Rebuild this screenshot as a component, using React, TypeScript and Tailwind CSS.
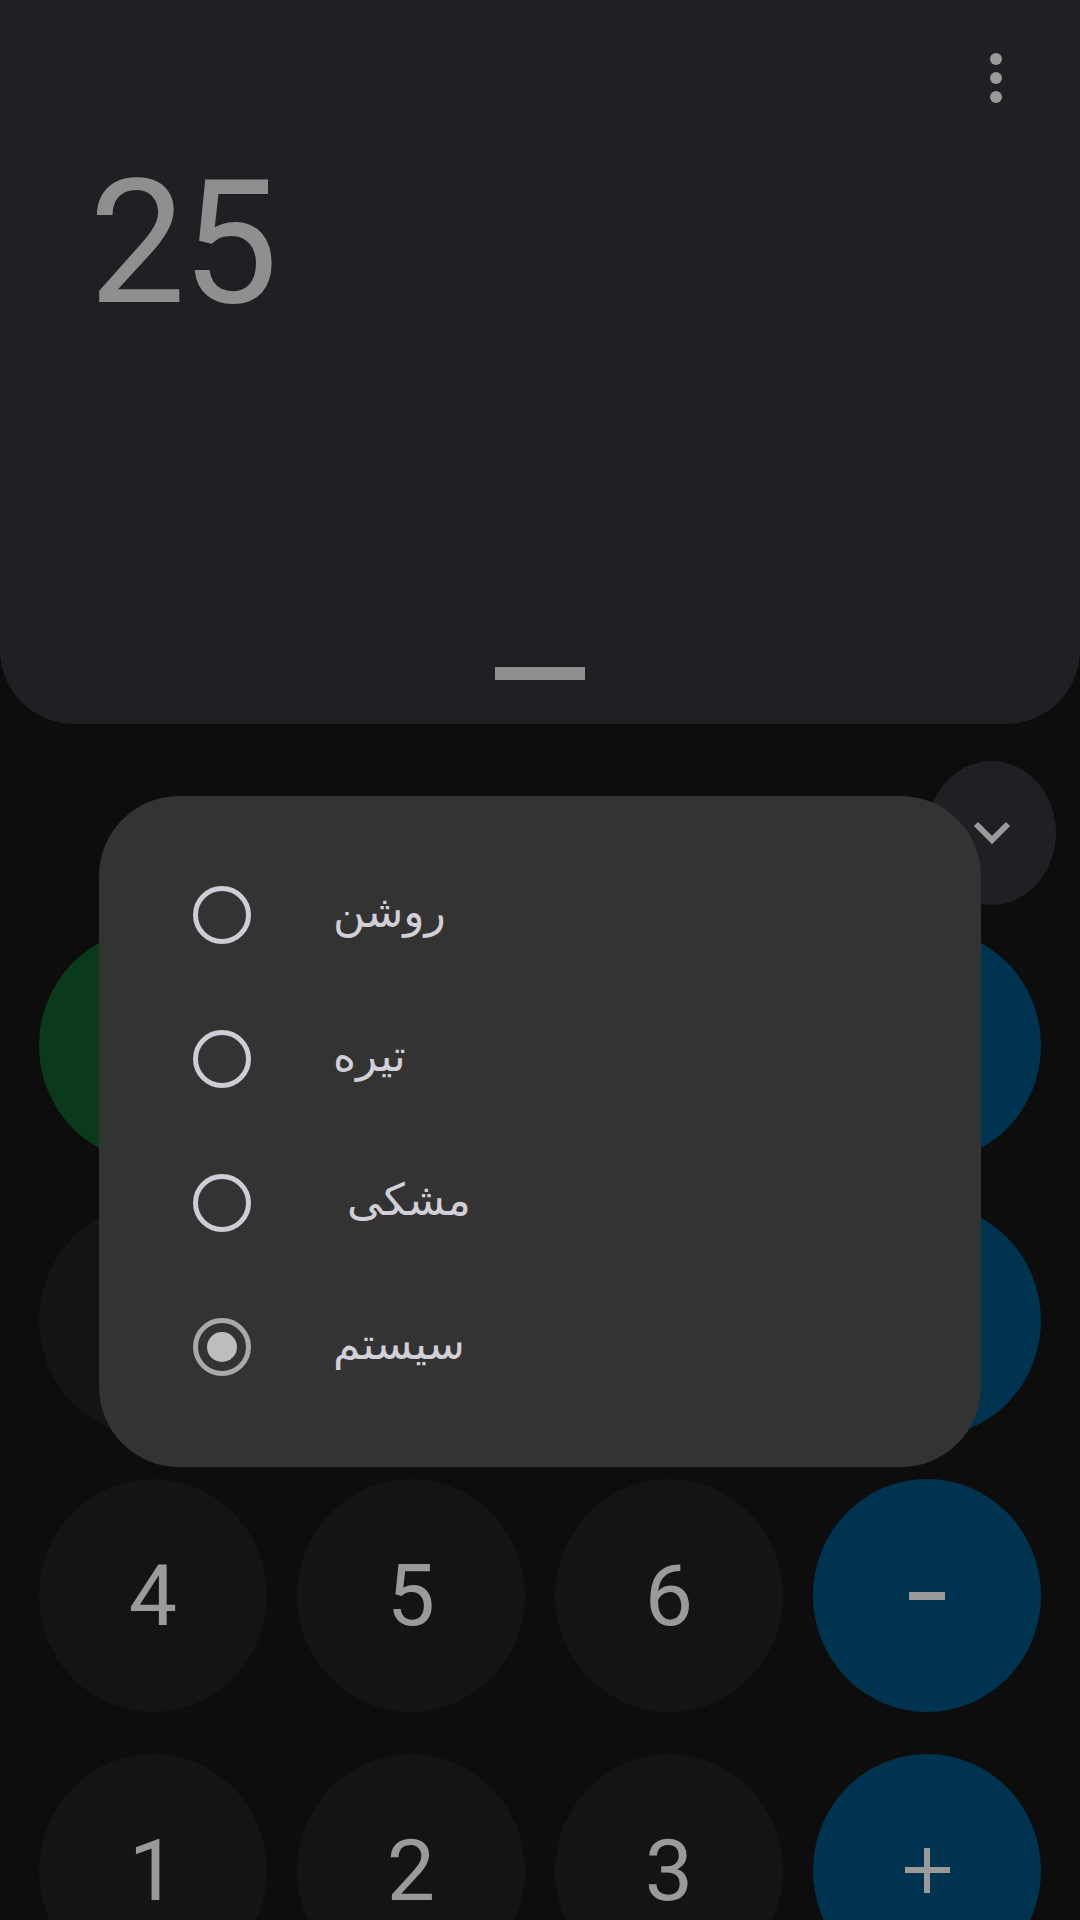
import React from "react";

const rows: { label: string; kind: "num" | "op" | "clear" }[][] = [
  [
    { label: "", kind: "clear" },
    { label: "", kind: "num" },
    { label: "", kind: "num" },
    { label: "", kind: "op" },
  ],
  [
    { label: "", kind: "num" },
    { label: "", kind: "num" },
    { label: "", kind: "num" },
    { label: "", kind: "op" },
  ],
  [
    { label: "4", kind: "num" },
    { label: "5", kind: "num" },
    { label: "6", kind: "num" },
    { label: "-", kind: "op" },
  ],
  [
    { label: "1", kind: "num" },
    { label: "2", kind: "num" },
    { label: "3", kind: "num" },
    { label: "+", kind: "op" },
  ],
];

function Key({ label, kind }: { label: string; kind: string }) {
  const bg =
    kind === "op" ? "bg-[#003350]" : kind === "clear" ? "bg-[#0a3a1b]" : "bg-[#131416]";
  let content: React.ReactNode = label;
  if (label === "-") {
    content = <span className="block w-[36px] h-[8px] bg-[#9a9a9a]" />;
  } else if (label === "+") {
    content = (
      <span className="relative block w-[45px] h-[45px]">
        <span className="absolute left-0 top-[19px] w-[45px] h-[6px] bg-[#9a9a9a]" />
        <span className="absolute top-0 left-[19px] w-[6px] h-[45px] bg-[#9a9a9a]" />
      </span>
    );
  }
  return (
    <div
      className={`${bg} w-[228px] h-[233px] rounded-[50%] flex items-center justify-center text-[#9a9a9a] text-[86px] leading-none`}
      style={{ fontFamily: "Roboto, sans-serif" }}
    >
      {content}
    </div>
  );
}

function Radio({ selected }: { selected?: boolean }) {
  if (selected) {
    return (
      <div className="w-[58px] h-[58px] rounded-full border-[5px] border-[#a9a9a9] flex items-center justify-center">
        <div className="w-[30px] h-[30px] rounded-full bg-[#bdbdbd]" />
      </div>
    );
  }
  return <div className="w-[58px] h-[58px] rounded-full border-[5px] border-[#d0ccd6]" />;
}

export default function App() {
  const options = [
    { text: "روشن", sel: false },
    { text: "تیره", sel: false },
    { text: "\u00A0مشکی", sel: false },
    { text: "سیستم", sel: true },
  ];
  return (
    <div className="relative w-[1080px] h-[1920px] overflow-hidden bg-[#0d0d0d]" style={{ fontFamily: "Roboto, sans-serif" }}>
      {/* display panel */}
      <div className="relative h-[724px] bg-[#1f2024] rounded-b-[74px]">
        <div className="absolute top-[53px] left-[990px] flex flex-col gap-[7px]">
          <span className="block w-[12px] h-[12px] rounded-full bg-[#9a9a9a]" />
          <span className="block w-[12px] h-[12px] rounded-full bg-[#9a9a9a]" />
          <span className="block w-[12px] h-[12px] rounded-full bg-[#9a9a9a]" />
        </div>
        <div className="pt-[157px] pl-[89px] text-[172px] leading-none text-[#8f8f8f] tracking-[-4px]">25</div>
        <div className="absolute left-[495px] top-[667px] w-[90px] h-[13px] bg-[#8f8f8f]" />
      </div>

      {/* chevron row */}
      <div className="flex justify-end pr-[24px] pt-[37px]">
        <div className="w-[129px] h-[144px] rounded-[50%] bg-[#1f2024] flex items-center justify-center">
          <svg width="40" height="26" viewBox="0 0 40 26">
            <path d="M4 4 L20 20 L36 4" fill="none" stroke="#9a9a9a" strokeWidth="6" />
          </svg>
        </div>
      </div>

      {/* keypad */}
      <div className="flex flex-col gap-[42px] pt-[24px] pl-[39px]">
        {rows.map((r, i) => (
          <div key={i} className="flex gap-[30px]">
            {r.map((k, j) => (
              <Key key={j} label={k.label} kind={k.kind} />
            ))}
          </div>
        ))}
      </div>

      {/* theme dialog */}
      <div className="absolute left-[99px] top-[796px] w-[882px] h-[671px] rounded-[80px] bg-[#333333] pt-[47px]">
        {options.map((o, i) => (
          <div key={i} className="h-[144px] flex items-center pl-[94px]">
            <Radio selected={o.sel} />
            <span
              className="ml-[82px] text-[44px] text-[#d3cfd9] leading-none -mt-[6px]"
              style={{ fontFamily: "'DejaVu Sans', 'Noto Sans', sans-serif" }}
            >
              {o.text}
            </span>
          </div>
        ))}
      </div>
    </div>
  );
}
